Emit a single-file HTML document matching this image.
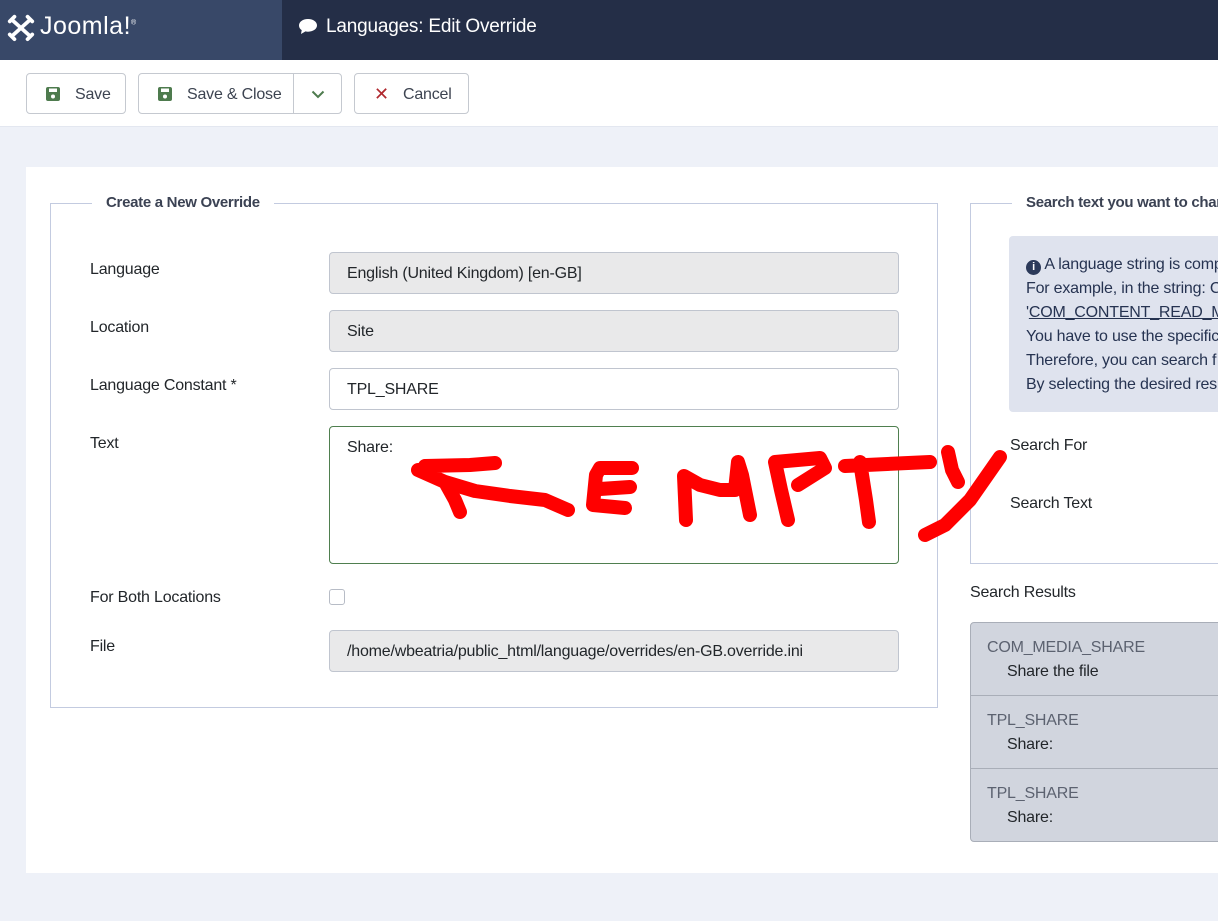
<!DOCTYPE html>
<html><head><meta charset="utf-8"><style>
*{box-sizing:border-box;margin:0;padding:0}
body{width:1218px;height:921px;overflow:hidden;background:#eef1f8;font-family:"Liberation Sans",sans-serif;font-size:16px;color:#22262a;position:relative;letter-spacing:-0.2px}
.a{position:absolute}
.hdr{left:0;top:0;width:1218px;height:60px;background:#242e47}
.logo{left:0;top:0;width:282px;height:60px;background:#384868}
.tb{left:0;top:60px;width:1218px;height:67px;background:#fff;border-bottom:1px solid #e3e7f0}
.btn{top:73px;height:41px;border:1px solid #c5c9d0;border-radius:4px;background:#fff;font-size:16px;color:#3d4451;line-height:41px}
.card{left:26px;top:167px;width:1192px;height:706px;background:#fff}
.fs{border:1px solid #c3cbe0}
.leg{background:#fff;padding:0 14px;font-weight:bold;font-size:15px;color:#3b4253;letter-spacing:-0.3px}
.lbl{font-size:16px;color:#22262a;margin-top:2px}
.inp{height:42px;border:1px solid #c0c5cf;border-radius:4px;padding:0 17px;line-height:42px;font-size:16px;color:#22262a}
.ro{background:#e9e9ea}
.res{font-size:16px;margin-top:2px}
</style></head><body>
<div class="a hdr"></div>
<div class="a logo">
<svg class="a" style="left:6px;top:12px" width="30" height="30" viewBox="0 0 32 32" fill="none" stroke="#fff" stroke-width="4" stroke-linecap="round"><path d="M6 8 L26 26 M26 8 L6 26 M9 5 L4 10 M23 5 L28 10 M9 29 L4 24 M23 29 L28 24"/></svg>
<div class="a" style="left:40px;top:12px;color:#fff;font-size:25px;letter-spacing:0.5px">Joomla!<sup style="font-size:7px">®</sup></div>
</div>
<svg class="a" style="left:298px;top:18px" width="20" height="18" viewBox="0 0 20 18"><path d="M10 1C4.5 1 1 4 1 7.5c0 2 1 3.5 2.7 4.6L3 16l4.5-2.6c.8.2 1.6.3 2.5.3 5.5 0 9-3 9-6.3S15.5 1 10 1z" fill="#fff"/></svg>
<div class="a" style="left:326px;top:16px;color:#fff;font-size:19px">Languages: Edit Override</div>
<div class="a tb"></div>
<div class="a btn" style="left:26px;width:100px"><svg class="a" style="left:19px;top:13px" width="14" height="14" viewBox="0 0 14 14"><rect x="0" y="0" width="14" height="14" rx="2" fill="#4e7b4e"/><rect x="3" y="1.5" width="8" height="3.5" fill="#fff"/><circle cx="7" cy="9.5" r="2" fill="#fff"/></svg><span class="a" style="left:48px">Save</span></div>
<div class="a btn" style="left:138px;width:204px"><svg class="a" style="left:19px;top:13px" width="14" height="14" viewBox="0 0 14 14"><rect x="0" y="0" width="14" height="14" rx="2" fill="#4e7b4e"/><rect x="3" y="1.5" width="8" height="3.5" fill="#fff"/><circle cx="7" cy="9.5" r="2" fill="#fff"/></svg><span class="a" style="left:48px">Save &amp; Close</span><div class="a" style="left:154px;top:0;height:39px;border-left:1px solid #c5c9d0;width:49px"><svg class="a" style="left:17px;top:16px" width="14" height="9" viewBox="0 0 14 9"><path d="M1.5 1.5 L7 7 L12.5 1.5" stroke="#4e7b4e" stroke-width="2" fill="none"/></svg></div></div>
<div class="a btn" style="left:354px;width:115px"><span class="a" style="left:19px;color:#b0282e;font-size:18px">✕</span><span class="a" style="left:48px">Cancel</span></div>
<div class="a card"></div>
<div class="a fs" style="left:50px;top:203px;width:888px;height:505px"></div>
<div class="a leg" style="left:92px;top:194px">Create a New Override</div>
<div class="a lbl" style="left:90px;top:259px">Language</div>
<div class="a lbl" style="left:90px;top:317px">Location</div>
<div class="a lbl" style="left:90px;top:375px">Language Constant *</div>
<div class="a lbl" style="left:90px;top:433px">Text</div>
<div class="a lbl" style="left:90px;top:587px">For Both Locations</div>
<div class="a lbl" style="left:90px;top:636px">File</div>
<div class="a inp ro" style="left:329px;top:252px;width:570px">English (United Kingdom) [en-GB]</div>
<div class="a inp ro" style="left:329px;top:310px;width:570px">Site</div>
<div class="a inp" style="left:329px;top:368px;width:570px">TPL_SHARE</div>
<div class="a inp" style="left:329px;top:426px;width:570px;height:138px;border-color:#4f7f4f">Share:</div>
<div class="a" style="left:329px;top:589px;width:16px;height:16px;border:1px solid #b7bcc6;border-radius:3px"></div>
<div class="a inp ro" style="left:329px;top:630px;width:570px">/home/wbeatria/public_html/language/overrides/en-GB.override.ini</div>
<div class="a fs" style="left:970px;top:203px;width:260px;height:361px"></div>
<div class="a leg" style="left:1012px;top:194px;white-space:nowrap">Search text you want to change</div>
<div class="a" style="left:1009px;top:236px;width:230px;height:176px;background:#dfe3ee;border-radius:4px;padding:17px 0 0 17px;font-size:16px;line-height:24px;white-space:nowrap;color:#263351;overflow:hidden">
<span style="display:inline-block;width:15px;height:15px;border-radius:50%;background:#2c3a5a;color:#fff;font-size:11px;line-height:15px;text-align:center;font-weight:bold;vertical-align:-1px">i</span> A language string is composed<br>For example, in the string: C<br>'<u>COM_CONTENT_READ_MORE</u><br>You have to use the specific<br>Therefore, you can search f<br>By selecting the desired res</div>
<div class="a lbl" style="left:1010px;top:435px">Search For</div>
<div class="a lbl" style="left:1010px;top:493px">Search Text</div>
<div class="a lbl" style="left:970px;top:582px">Search Results</div>
<div class="a" style="left:970px;top:622px;width:260px;height:220px;background:#d1d5de;border:1px solid #a9aeb8;border-radius:4px"></div>
<div class="a" style="left:971px;top:695px;width:250px;border-top:1px solid #a9aeb8"></div>
<div class="a" style="left:971px;top:768px;width:250px;border-top:1px solid #a9aeb8"></div>
<div class="a res" style="left:987px;top:637px;color:#5c6270">COM_MEDIA_SHARE</div>
<div class="a res" style="left:1007px;top:661px">Share the file</div>
<div class="a res" style="left:987px;top:710px;color:#5c6270">TPL_SHARE</div>
<div class="a res" style="left:1007px;top:734px">Share:</div>
<div class="a res" style="left:987px;top:783px;color:#5c6270">TPL_SHARE</div>
<div class="a res" style="left:1007px;top:807px">Share:</div>
<svg class="a" style="left:0;top:0" width="1218" height="921" fill="none" stroke="#f00" stroke-width="14" stroke-linecap="round" stroke-linejoin="round">
<path d="M495 463 L470 465 L425 466 M418 470 L445 482 L475 491 L510 496 L545 500 L568 510 M445 482 L455 500 L460 512"/>
<path d="M632 468 L600 468 L596 475 L593 505 L625 508 M600 489 L630 487"/>
<path d="M686 520 L684 476 L700 485 L720 490 L735 490 L738 462 L742 475 L750 515"/>
<path d="M788 520 L781 490 L775 462 L820 458 L825 468 L798 485"/>
<path d="M845 466 L930 462 M860 462 L866 500 L869 522"/>
<path d="M948 452 L952 470 L958 482 M1000 457 L970 500 L945 525 L925 535"/>
</svg>
</body></html>
